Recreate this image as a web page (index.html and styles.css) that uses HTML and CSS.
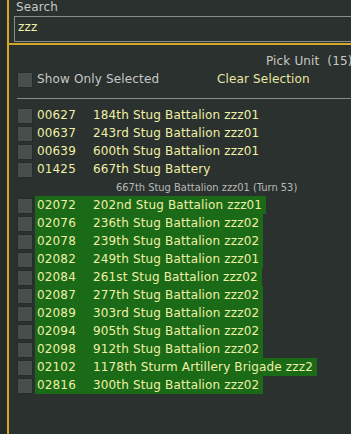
FILE: index.html
```html
<!DOCTYPE html>
<html>
<head>
<meta charset="utf-8">
<link rel="stylesheet" href="styles.css">
</head>
<body>
<div class="frame">
  <div class="rail"></div>
  <div class="panel">
    <div class="search">
      <div class="search-label">Search</div>
      <div class="search-input">zzz</div>
    </div>
    <div class="picker">
      <div class="pick-title">Pick Unit&nbsp; (15)</div>
      <div class="options">
        <span class="check"></span>
        <span class="opt-label">Show Only Selected</span>
        <span class="clear">Clear Selection</span>
      </div>
      <div class="divider"></div>
      <div class="list">
        <div class="row"><span class="check"></span><span class="unit"><span class="num">00627</span><span class="name">184th Stug Battalion zzz01</span></span></div>
        <div class="row"><span class="check"></span><span class="unit"><span class="num">00637</span><span class="name">243rd Stug Battalion zzz01</span></span></div>
        <div class="row"><span class="check"></span><span class="unit"><span class="num">00639</span><span class="name">600th Stug Battalion zzz01</span></span></div>
        <div class="row"><span class="check"></span><span class="unit"><span class="num">01425</span><span class="name">667th Stug Battery</span></span></div>
        <div class="subline">667th Stug Battalion zzz01 (Turn 53)</div>
        <div class="row"><span class="check"></span><span class="unit sel"><span class="num">02072</span><span class="name">202nd Stug Battalion zzz01</span></span></div>
        <div class="row"><span class="check"></span><span class="unit sel"><span class="num">02076</span><span class="name">236th Stug Battalion zzz02</span></span></div>
        <div class="row"><span class="check"></span><span class="unit sel"><span class="num">02078</span><span class="name">239th Stug Battalion zzz02</span></span></div>
        <div class="row"><span class="check"></span><span class="unit sel"><span class="num">02082</span><span class="name">249th Stug Battalion zzz01</span></span></div>
        <div class="row"><span class="check"></span><span class="unit sel"><span class="num">02084</span><span class="name">261st Stug Battalion zzz02</span></span></div>
        <div class="row"><span class="check"></span><span class="unit sel"><span class="num">02087</span><span class="name">277th Stug Battalion zzz02</span></span></div>
        <div class="row"><span class="check"></span><span class="unit sel"><span class="num">02089</span><span class="name">303rd Stug Battalion zzz02</span></span></div>
        <div class="row"><span class="check"></span><span class="unit sel"><span class="num">02094</span><span class="name">905th Stug Battalion zzz02</span></span></div>
        <div class="row"><span class="check"></span><span class="unit sel"><span class="num">02098</span><span class="name">912th Stug Battalion zzz02</span></span></div>
        <div class="row"><span class="check"></span><span class="unit sel"><span class="num">02102</span><span class="name">1178th Sturm Artillery Brigade zzz2</span></span></div>
        <div class="row"><span class="check"></span><span class="unit sel"><span class="num">02816</span><span class="name">300th Stug Battalion zzz02</span></span></div>
      </div>
    </div>
  </div>
</div>
</body>
</html>
```
FILE: styles.css
```css
html, body {
  margin: 0;
  padding: 0;
  background: #2b312e;
  width: 351px;
  height: 434px;
  overflow: hidden;
  font-family: "DejaVu Sans", Verdana, sans-serif;
  font-size: 12px;
  letter-spacing: 0.15px;
}
.frame {
  display: flex;
  height: 434px;
}
.rail {
  width: 7px;
  flex: none;
  background: #242a27;
}
.panel {
  flex: 1;
  min-width: 0;
  border-left: 2px solid #d6a62a;
  overflow: hidden;
}
.search {
  padding-left: 5px;
  border-bottom: 2px solid #d6a62a;
}
.search-label {
  padding-left: 2px;
  height: 14px;
  line-height: 14px;
  color: #c6c8c6;
  white-space: nowrap;
}
.search-input {
  margin-top: 2px;
  margin-bottom: 1px;
  margin-right: -30px;
  border: 1px solid #8a8e8b;
  height: 21px;
  line-height: 21px;
  padding: 0 3px 3px 3px;
  color: #f2f2a8;
}
.picker {
  padding-top: 7px;
}
.pick-title {
  padding-left: 257px;
  height: 18px;
  line-height: 18px;
  color: #c6c8c6;
  white-space: nowrap;
}
.options {
  display: flex;
  align-items: flex-end;
  height: 18px;
  padding-left: 8px;
  white-space: nowrap;
}
.opt-label {
  line-height: 18px;
  color: #c6c8c6;
  margin-left: 4px;
  width: 180px;
}
.clear {
  line-height: 18px;
  color: #e8e8a2;
}
.check {
  flex: none;
  box-sizing: border-box;
  width: 16px;
  height: 16px;
  background: #474e4b;
  border: 1px solid #262c29;
}
.divider {
  margin: 10px 0 0 8px;
  height: 1px;
  background: #8a8e8b;
}
.list {
  padding: 7px 0 0 8px;
}
.row {
  display: flex;
  align-items: flex-end;
  height: 18px;
  white-space: nowrap;
}
.unit {
  display: flex;
  height: 18px;
  line-height: 18px;
  margin-left: 2px;
  padding: 0 4px 0 2px;
  color: #f0f0a6;
}
.unit.sel {
  background: #1b6a17;
}
.num {
  width: 56px;
}
.subline {
  height: 18px;
  box-sizing: border-box;
  padding: 1px 0 0 99px;
  line-height: 18px;
  font-family: "DejaVu Sans Condensed", "DejaVu Sans", sans-serif;
  font-stretch: condensed;
  font-size: 11px;
  letter-spacing: 0;
  color: #b8bab8;
  white-space: nowrap;
}
```
